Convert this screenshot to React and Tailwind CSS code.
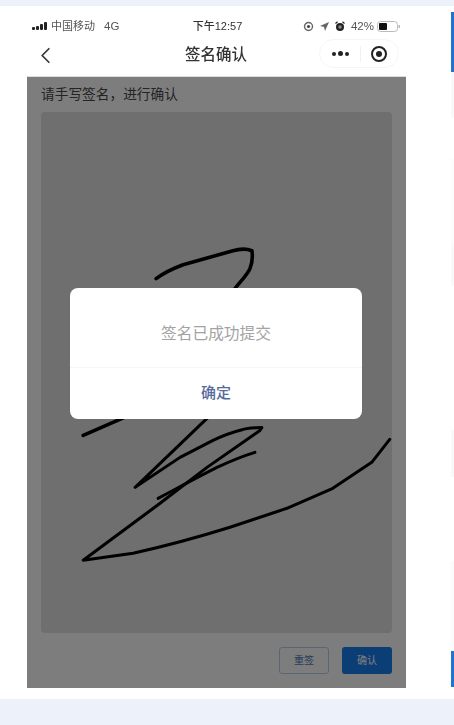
import React from 'react';
import { ChevronLeft } from 'lucide-react';

const FONT = 'font-["Liberation_Sans","Noto_Sans_CJK_SC",sans-serif]';

const StatusBar = () => (
    <div className="h-[31px] pt-[10px] px-[5px] flex items-center justify-between text-[#333333]">
        <div className="flex items-center w-[130px] text-[11px] leading-none text-[#555555]">
            <svg width="17" height="9" viewBox="0 0 17 9" className="mr-[2px]">
                <rect x="0" y="5" width="3" height="3" rx="1" fill="#222" />
                <rect x="4" y="4" width="3" height="4" rx="1" fill="#222" />
                <rect x="8" y="2" width="3" height="6" rx="1" fill="#222" />
                <rect x="12" y="0" width="3" height="8" rx="1" fill="#222" />
            </svg>
            <span>中国移动</span>
            <span className="ml-[9px] text-[11.5px]">4G</span>
        </div>
        <span className="text-[11px] leading-none font-medium text-[#333333] ml-[2px]">下午12:57</span>
        <div className="flex items-center justify-end w-[130px] text-[11px] leading-none text-[#555555]">
            <svg width="11" height="11" viewBox="0 0 11 11" className="mr-[6px]">
                <circle cx="5.5" cy="5.5" r="4" fill="none" stroke="#666" strokeWidth="1.4" />
                <circle cx="5.5" cy="5.5" r="1.6" fill="#444" />
            </svg>
            <svg width="9" height="9" viewBox="0 0 9 9" className="mr-[6px]">
                <path d="M9 0 L0 4 L4 5 L5 9 Z" fill="#666" />
            </svg>
            <svg width="10" height="11" viewBox="0 0 10 11" className="mr-[6px]">
                <circle cx="5" cy="6" r="4" fill="#222" />
                <circle cx="5" cy="6" r="1.8" fill="#888" />
                <path d="M0.5 2.5 L2.5 0.8 M9.5 2.5 L7.5 0.8" stroke="#222" strokeWidth="1.2" />
            </svg>
            <span className="text-[11.5px]">42%</span>
            <svg width="23" height="11" viewBox="0 0 23 11" className="ml-[3px] mr-[1px]">
                <rect x="0.5" y="0.5" width="20" height="10" rx="3" fill="none" stroke="#bbb" />
                <rect x="2" y="2" width="8" height="7" rx="1" fill="#111" />
                <rect x="21.5" y="4" width="1.5" height="3" fill="#bbb" />
            </svg>
        </div>
    </div>
);

const NavBar = () => (
    <div className="relative h-[39px] flex items-center justify-center">
        <ChevronLeft className="absolute left-[5px] top-[5px] w-[27px] h-[27px] text-[#333333]" strokeWidth={1.5} />
        <h1 className="text-[15.5px] leading-none font-medium text-[#333333] ml-[-1px] mt-[-3px]">签名确认</h1>
        <div className="absolute right-[7px] top-[2px] w-[80px] h-[29px] rounded-full border border-[#f5f5f5] flex items-center">
            <div className="w-[40px] flex items-center justify-center gap-[2px]">
                <span className="w-[4px] h-[4px] rounded-full bg-[#222222]" />
                <span className="w-[5px] h-[5px] rounded-full bg-[#222222]" />
                <span className="w-[4px] h-[4px] rounded-full bg-[#222222]" />
            </div>
            <div className="w-px h-[16px] bg-[#f0f0f0]" />
            <div className="flex-1 flex items-center justify-center pr-[2px]">
                <div className="w-[16px] h-[16px] rounded-full border-2 border-[#222222] flex items-center justify-center">
                    <span className="w-[6px] h-[6px] rounded-full bg-[#222222]" />
                </div>
            </div>
        </div>
    </div>
);

const Signature = () => (
    <svg className="absolute left-0 top-0 w-full h-full overflow-visible" viewBox="0 0 379 612" fill="none" stroke="#000" strokeLinecap="round" strokeLinejoin="round">
        <g transform="translate(-27 -76)">
            <path strokeWidth="3.6" d="M156 278 C165 271 175 267 183 264 L233 250 C240 248 247 248 252 250 C253 257 252 263 250 268 C246 276 240 281 235 288 L207 330 L150 405 L122 418 L83 435" />
            <path strokeWidth="3" d="M207 418 L135 487 L180 457 L213 440 C225 434 235 431 243 429 C250 427 257 427 262 427 L260 430 L207 467 L160 503 L83 560 L133 553 C165 546 198 537 230 527 L287 508 L333 488 L372 462 L390 439" />
            <path strokeWidth="3" d="M255 452 C242 456 230 461 217 467 C195 478 177 488 158 498" />
        </g>
    </svg>
);

const SideRail = () => (
    <div className="w-[3px] ml-[45px] flex flex-col pt-[6px] pb-[12px] blur-[0.5px]">
        <div className="h-[60px] bg-[#1f73d2]" />
        <div className="h-[46px] bg-[#f9f9f9]" />
        <div className="h-[41px] bg-white" />
        <div className="h-[85px] bg-[#fcfcfc]" />
        <div className="h-[42px] bg-[#f9f9f9]" />
        <div className="h-[144px] bg-white" />
        <div className="h-[47px] bg-[#f9f9f9]" />
        <div className="h-[84px] bg-white" />
        <div className="h-[90px] bg-[#fbfbfb]" />
        <div className="flex-1 bg-[#1f73d2]" />
    </div>
);

export default function App() {
    return (
        <div className={`w-[454px] h-[725px] bg-[#edf1f9] pt-[6px] pb-[26px] flex flex-col overflow-hidden ${FONT}`}>
            <div className="flex-1 min-h-0 bg-white flex pl-[27px]">
                <div className="w-[379px] flex flex-col pb-[11px] blur-[0.5px]">
                    <StatusBar />
                    <NavBar />
                    <div className="relative flex-1 min-h-0 flex flex-col border-t border-[#dddddd] bg-white px-[14px]">
                        <p className="h-[35px] flex items-center text-[13.7px] leading-none text-[#4a4a4a]">请手写签名，进行确认</p>
                        <div className="h-[521px] bg-[#e2e2e2] rounded-[4px]" />
                        <div className="flex-1 flex items-center justify-end gap-[13px]">
                            <button className="w-[50px] h-[27px] rounded-[3px] border border-[#b8d0ee] text-[10px] text-[#4f80bd]">重签</button>
                            <button className="w-[50px] h-[27px] rounded-[3px] bg-[#1a7ef0] text-[10px] text-white">确认</button>
                        </div>
                        <Signature />
                        <div className="absolute inset-0 bg-black/[0.51]" />
                        <div className="absolute left-[43px] top-[211px] w-[292px] h-[131px] rounded-[8px] bg-white flex flex-col">
                            <div className="h-[80px] pt-[12px] border-b border-[#f6f6f6] flex items-center justify-center text-[15.7px] text-[#a3a3a3]">签名已成功提交</div>
                            <div className="flex-1 flex items-center justify-center text-[15px] font-medium text-[#566a9b]">确定</div>
                        </div>
                    </div>
                </div>
                <SideRail />
            </div>
        </div>
    );
}
